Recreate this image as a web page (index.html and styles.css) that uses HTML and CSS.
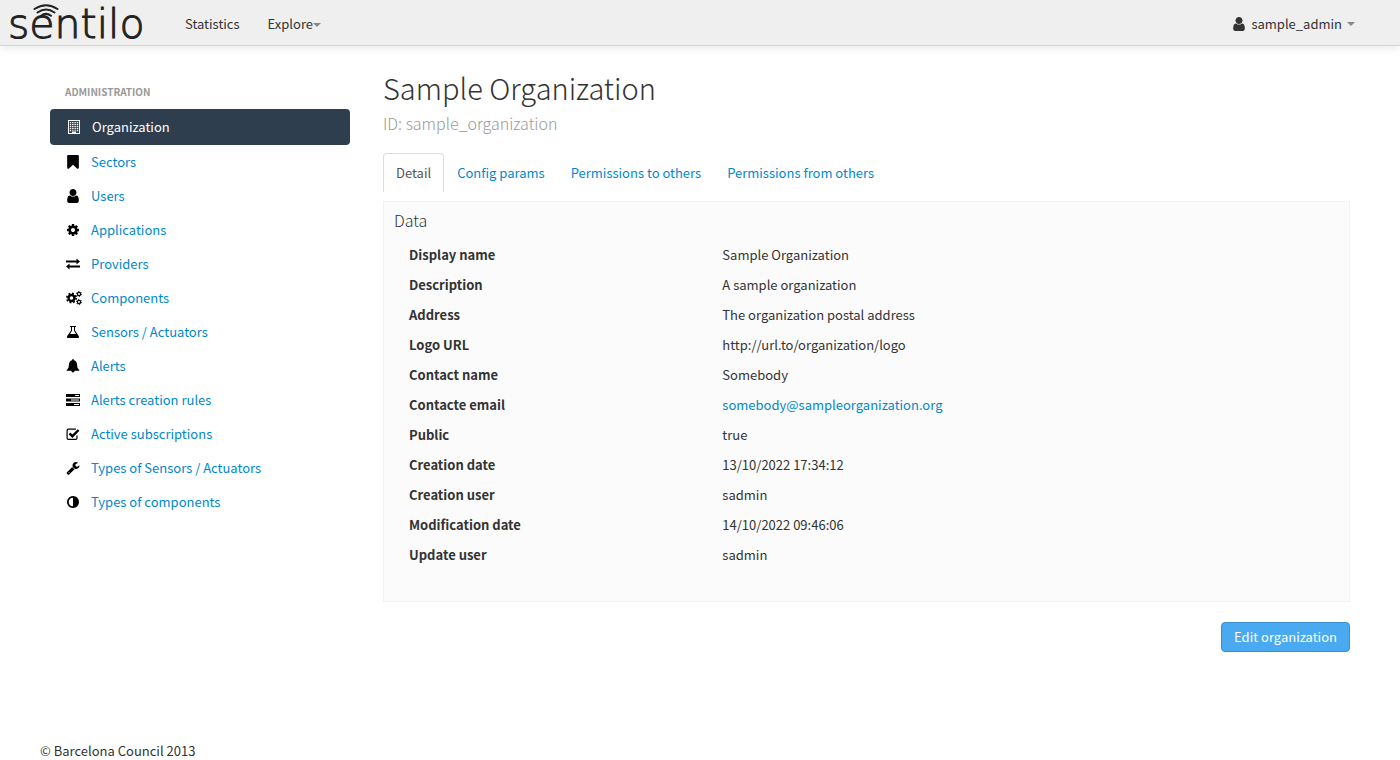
FILE: index.html
```
<!DOCTYPE html>
<html lang="en">
<head>
    <meta charset="UTF-8">
    <meta name="viewport" content="width=device-width, initial-scale=1.0">
    <title>Sentilo - Sample Organization</title>
    <link rel="stylesheet" href="styles.css">
</head>
<body>
    <svg class="sprite" aria-hidden="true">
        <symbol id="icon-user" viewBox="128 128 1536 1536">
            <path d="M1536 1399q0 109-62.5 187t-150.5 78h-854q-88 0-150.5-78t-62.5-187q0-85 8.5-160.5t31.5-152 58.5-131 94-89 134.5-34.5q131 128 313 128t313-128q76 0 134.5 34.5t94 89 58.5 131 31.5 152 8.5 160.5zm-256-887q0 159-112.5 271.5t-271.5 112.5-271.5-112.5-112.5-271.5 112.5-271.5 271.5-112.5 271.5 112.5 112.5 271.5z"/>
        </symbol>
    </svg>

    <header class="navbar">
        <a class="brand" href="#" aria-label="sentilo">
            <svg class="waves" viewBox="0 0 26 13">
                <path d="M1.500 5Q13-2.500 24.500 5M4.500 8.500Q13 2.500 21.500 8.500M8 11.800Q13 8 18 11.800"/>
            </svg>
            <span class="wordmark">sentilo</span>
        </a>
        <nav class="menu">
            <a href="#">Statistics</a>
            <a href="#">Explore<span class="caret"></span></a>
        </nav>
        <a class="account" href="#">
            <svg class="icon"><use href="#icon-user"/></svg>
            sample_admin
            <span class="caret"></span>
        </a>
    </header>

    <div class="container">
        <aside class="sidebar">
            <h6>ADMINISTRATION</h6>
            <ul>
                <li><a class="active" href="#">
                    <svg class="icon" viewBox="0 0 14 14">
                        <path fill-rule="evenodd" d="M1 0h12v14H1zM2 1v12h3v-1.500h4V13h3V1z"/>
                        <path d="M3.500 2v9.500M5.800 2v8.800M8.200 2v8.800M10.500 2v9.500" fill="none" stroke="currentColor" stroke-width="1.400" stroke-dasharray="1.200 0.800"/>
                    </svg>
                    Organization</a></li>
                <li><a href="#">
                    <svg class="icon" viewBox="128 128 1536 1536">
                        <path d="M1420 128q23 0 44 9 33 13 52.500 41t19.500 62v1289q0 34-19.500 62t-52.500 41q-19 8-44 8-48 0-83-32l-441-424-441 424q-36 33-83 33-23 0-44-9-33-13-52.500-41t-19.500-62v-1289q0-34 19.500-62t52.500-41q21-9 44-9h1048z"/>
                    </svg>
                    Sectors</a></li>
                <li><a href="#">
                    <svg class="icon"><use href="#icon-user"/></svg>
                    Users</a></li>
                <li><a href="#">
                    <svg class="icon" viewBox="0 0 1792 1792">
                        <path d="M1152 896q0-106-75-181t-181-75-181 75-75 181 75 181 181 75 181-75 75-181zm512-109v222q0 12-8 23t-20 13l-185 28q-19 54-39 91 35 50 107 138 10 12 10 25t-9 23q-27 37-99 108t-94 71q-12 0-26-9l-138-108q-44 23-91 38-16 136-29 186-7 28-36 28h-222q-14 0-24.500-8.500t-11.500-21.500l-28-184q-49-16-90-37l-141 107q-10 9-25 9-14 0-25-11-126-114-165-168-7-10-7-23 0-12 8-23 15-21 51-66.500t54-70.500q-27-50-41-99l-183-27q-13-2-21-12.500t-8-23.500v-222q0-12 8-23t19-13l186-28q14-46 39-92-40-57-107-138-10-12-10-24 0-10 9-23 26-36 98.500-107.500t94.500-71.500q13 0 26 10l138 107q44-23 91-38 16-136 29-186 7-28 36-28h222q14 0 24.500 8.500t11.500 21.500l28 184q49 16 90 37l142-107q9-9 24-9 13 0 25 10 129 119 165 170 7 8 7 22 0 12-8 23-15 21-51 66.500t-54 70.500q26 50 41 98l183 28q13 2 21 12.500t8 23.500z"/>
                    </svg>
                    Applications</a></li>
                <li><a href="#">
                    <svg class="icon" viewBox="0 0 14 14">
                        <path d="M0 3.500h10.500v-2L14 4.500l-3.500 3V5.500H0zM14 8.500H3.500v-2L0 9.500l3.500 3v-2H14z"/>
                    </svg>
                    Providers</a></li>
                <li><a href="#">
                    <svg class="icon gears" viewBox="0 0 16 14">
                        <circle cx="5.500" cy="7" r="3" stroke-width="2.400"/>
                        <circle cx="5.500" cy="7" r="4.700" stroke-width="1.600" stroke-dasharray="1.850 1.840"/>
                        <circle cx="13" cy="3" r="1.600" stroke-width="1.200"/>
                        <circle cx="13" cy="3" r="2.500" stroke-width="1" stroke-dasharray="1.300 1.320"/>
                        <circle cx="13" cy="11" r="1.600" stroke-width="1.200"/>
                        <circle cx="13" cy="11" r="2.500" stroke-width="1" stroke-dasharray="1.300 1.320"/>
                    </svg>
                    Components</a></li>
                <li><a href="#">
                    <svg class="icon" viewBox="0 0 14 14">
                        <path fill-rule="evenodd" d="M4 1h6v1H9v3.500l3.700 5.500q1 2-.900 2H2.200q-1.900 0-.900-2L5 5.500V2H4zM6 2v3.800L4 9h6L8 5.800V2z"/>
                    </svg>
                    Sensors / Actuators</a></li>
                <li><a href="#">
                    <svg class="icon" viewBox="0 0 14 14">
                        <path d="M7 0q.900 0 .900 1.200Q11 2 11 5.500 11 9.500 13.300 11v.800H8.700Q8.500 13.500 7 13.500T5.300 11.800H.700V11Q3 9.500 3 5.500 3 2 6.100 1.200 6.100 0 7 0z"/>
                    </svg>
                    Alerts</a></li>
                <li><a href="#">
                    <svg class="icon" viewBox="0 0 14 14">
                        <path fill-rule="evenodd" d="M0 1h14v3H0zM0 5.500h14v3H0zM0 10h14v3H0zM9 2v1h4V2zM5 6.500v1h8v-1zM8 11v1h5v-1z"/>
                    </svg>
                    Alerts creation rules</a></li>
                <li><a href="#">
                    <svg class="icon" viewBox="0 0 14 14">
                        <path d="M11 8.500V11q0 1.400-1.400 1.400H2.500Q1.100 12.400 1.100 11V3.500q0-1.400 1.400-1.400H10" fill="none" stroke="currentColor" stroke-width="1.200"/>
                        <path d="M3.500 6.300L6.400 9.200 12.600 3" fill="none" stroke="currentColor" stroke-width="2.400"/>
                    </svg>
                    Active subscriptions</a></li>
                <li><a href="#">
                    <svg class="icon" viewBox="0 0 1792 1792">
                        <path d="M448 1472q0-26-19-45t-45-19-45 19-19 45 19 45 45 19 45-19 19-45zm644-420l-682 682q-37 37-90 37-52 0-91-37l-106-108q-38-36-38-90 0-53 38-91l681-681q39 98 114.500 173.500t173.500 114.500zm634-435q0 39-23 106-47 134-164.500 217.500t-258.500 83.500q-185 0-316.500-131.500t-131.500-316.500 131.500-316.500 316.500-131.500q58 0 121.500 16.500t107.500 46.500q16 11 16 28t-16 28l-293 169v224l193 107q5-3 79-48.500t135.500-81 70.500-35.500q15 0 23.500 10t8.500 25z"/>
                    </svg>
                    Types of Sensors / Actuators</a></li>
                <li><a href="#">
                    <svg class="icon" viewBox="0 0 1792 1792">
                        <path d="M896 1440v-1088q-148 0-273 73t-198 198-73 273 73 273 198 198 273 73zm768-544q0 209-103 385.500t-279.500 279.500-385.500 103-385.500-103-279.500-279.500-103-385.500 103-385.500 279.500-279.500 385.500-103 385.500 103 279.500 279.500 103 385.500z"/>
                    </svg>
                    Types of components</a></li>
            </ul>
        </aside>

        <main class="content">
            <h1>Sample Organization</h1>
            <p class="lead">ID: sample_organization</p>

            <nav class="tabs">
                <a class="active" href="#">Detail</a>
                <a href="#">Config params</a>
                <a href="#">Permissions to others</a>
                <a href="#">Permissions from others</a>
            </nav>

            <section class="panel">
                <h2>Data</h2>
                <dl>
                    <dt>Display name</dt>
                    <dd>Sample Organization</dd>
                    <dt>Description</dt>
                    <dd>A sample organization</dd>
                    <dt>Address</dt>
                    <dd>The organization postal address</dd>
                    <dt>Logo URL</dt>
                    <dd>http://url.to/organization/logo</dd>
                    <dt>Contact name</dt>
                    <dd>Somebody</dd>
                    <dt>Contacte email</dt>
                    <dd><a href="mailto:somebody@sampleorganization.org">somebody@sampleorganization.org</a></dd>
                    <dt>Public</dt>
                    <dd>true</dd>
                    <dt>Creation date</dt>
                    <dd>13/10/2022 17:34:12</dd>
                    <dt>Creation user</dt>
                    <dd>sadmin</dd>
                    <dt>Modification date</dt>
                    <dd>14/10/2022 09:46:06</dd>
                    <dt>Update user</dt>
                    <dd>sadmin</dd>
                </dl>
            </section>

            <div class="actions">
                <button type="button">Edit organization</button>
            </div>
        </main>
    </div>

    <footer>&copy; Barcelona Council 2013</footer>
</body>
</html>
```
FILE: styles.css
```
* {
    box-sizing: border-box;
}
body {
    margin: 0;
    min-height: 100vh;
    display: flex;
    flex-direction: column;
    background-color: #fff;
    color: #333;
    font-family: "Noto Sans CJK SC", "Open Sans", sans-serif;
    font-size: 13px;
    line-height: 20px;
}
a {
    color: #08c;
    text-decoration: none;
}
h1, h2, h6, p, ul, dl, dd {
    margin: 0;
    padding: 0;
}
.sprite {
    display: none;
}
.icon {
    width: 14px;
    height: 14px;
    flex: none;
    fill: currentColor;
    color: #000;
}

/* top bar */
.navbar {
    display: flex;
    align-items: center;
    height: 46px;
    padding: 2px 45px 0 8px;
    background-color: #efefef;
    border-bottom: 1px solid #d4d4d4;
    box-shadow: 0 1px 10px rgba(0, 0, 0, 0.1);
}
.navbar a {
    color: #333;
}
.navbar .icon {
    color: #333;
}
.navbar .brand {
    position: relative;
    width: 147px;
    color: #222;
}
.wordmark {
    display: block;
    padding-top: 2px;
    font-family: "DejaVu Sans", sans-serif;
    font-weight: 200;
    font-size: 41px;
    line-height: 41px;
    -webkit-text-stroke: 1px #222;
}
.waves {
    position: absolute;
    top: 2px;
    left: 25px;
    width: 26px;
    height: 13px;
    fill: none;
    stroke: #222;
    stroke-width: 2;
    stroke-linecap: round;
}
.menu {
    display: flex;
    gap: 28px;
    margin-left: 30px;
}
.caret {
    display: inline-block;
    border-top: 4px solid #888;
    border-left: 4px solid transparent;
    border-right: 4px solid transparent;
    vertical-align: middle;
}
.account {
    display: flex;
    align-items: center;
    gap: 5px;
    margin-left: auto;
}

.container {
    display: grid;
    grid-template-columns: 300px 1fr;
    gap: 33px;
    padding: 26px 50px 0;
}

/* left menu */
.sidebar h6 {
    padding: 10px 15px 7px;
    color: #999;
    font-size: 10px;
    line-height: 20px;
}
.sidebar ul {
    list-style: none;
}
.sidebar li a {
    display: flex;
    align-items: center;
    gap: 11px;
    height: 34px;
    padding: 0 16px;
}
.sidebar li a.active {
    height: 36px;
    padding: 0 17px;
    background-color: #2f3e4f;
    border-radius: 4px;
    color: #fff;
}
.sidebar .active .icon {
    color: #fff;
}
.gears {
    width: 16px;
    margin-right: -2px;
    fill: none;
    stroke: currentColor;
}

/* detail */
.content h1 {
    font-size: 29px;
    font-weight: 300;
    line-height: 30px;
}
.lead {
    margin-top: 11px;
    color: #999;
    font-size: 16px;
    font-weight: 300;
    line-height: 20px;
}
.tabs {
    display: flex;
    margin: 20px 0 9px;
}
.tabs a {
    padding: 8px 12px;
    border: 1px solid transparent;
    border-bottom: 0;
    border-radius: 4px 4px 0 0;
    line-height: 22px;
}
.tabs a.active {
    border-color: #ddd;
    color: #555;
}
.panel {
    padding: 8px 10px 31px;
    background-color: #fbfbfb;
    border: 1px solid #f2f2f2;
}
.panel h2 {
    font-size: 16px;
    font-weight: 300;
    line-height: 20px;
}
.panel dl {
    display: grid;
    grid-template-columns: 1fr 2fr;
    column-gap: 5px;
    padding: 10px 0 0 15px;
    line-height: 30px;
}
.panel dt {
    font-weight: bold;
}
.actions {
    display: flex;
    justify-content: flex-end;
    margin-top: 20px;
}
button {
    height: 30px;
    padding: 0 12px 2px;
    background-color: #49aaf2;
    border: 1px solid #3d8fd1;
    border-radius: 4px;
    color: #fff;
    font-family: inherit;
    font-size: 13px;
    cursor: pointer;
}
footer {
    margin-top: auto;
    padding: 0 40px;
    line-height: 18px;
}
```
